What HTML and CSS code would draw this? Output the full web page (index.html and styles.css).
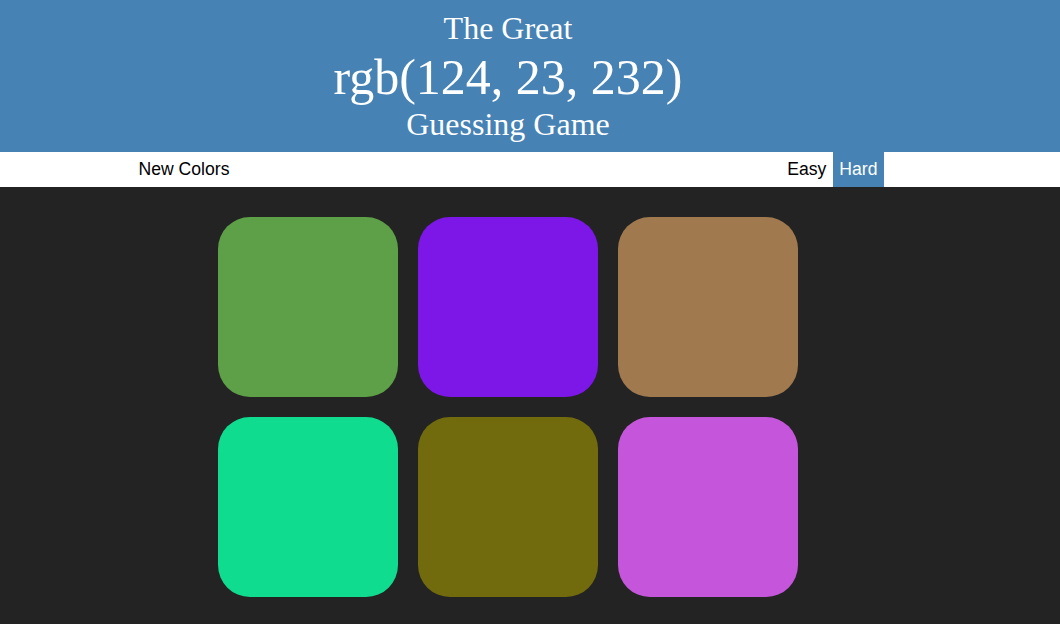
FILE: index.html
```html
<!DOCTYPE html>
<html>
<head>
<meta charset="utf-8">
<title>Color Game</title>
<link rel="stylesheet" href="styles.css">
</head>
<body>
<header class="header">
  <div class="title-small">The Great</div>
  <div class="title-rgb">rgb(124, 23, 232)</div>
  <div class="title-small title-last">Guessing Game</div>
</header>
<nav class="stripe">
  <div class="stripe-inner">
    <button class="btn">New Colors</button>
    <span class="spacer"></span>
    <button class="btn">Easy</button>
    <button class="btn selected">Hard</button>
  </div>
</nav>
<main class="board">
  <div class="grid">
    <div class="square sq-green"></div>
    <div class="square sq-purple"></div>
    <div class="square sq-brown"></div>
    <div class="square sq-teal"></div>
    <div class="square sq-olive"></div>
    <div class="square sq-pink"></div>
  </div>
</main>
</body>
</html>
```

FILE: styles.css
```css
html, body {
  margin: 0;
  padding: 0;
}
body {
  background: #232323;
  height: 624px;
  overflow: hidden;
}
.header {
  background: #4682B4;
  color: #fff;
  font-family: "Liberation Serif", "Times New Roman", serif;
  text-align: center;
  height: 152px;
  box-sizing: border-box;
  padding: 10px 44px 0 0;
}
.title-small {
  font-size: 32px;
  line-height: 36px;
}
.title-rgb {
  font-size: 50px;
  line-height: 55px;
  margin-top: 4px;
}
.title-last {
  margin-top: 1px;
}
.stripe {
  background: #fff;
  height: 35px;
  padding-right: 44px;
}
.stripe-inner {
  width: 752px;
  height: 35px;
  margin: 0 auto;
  display: flex;
  align-items: stretch;
}
.spacer {
  flex: 1;
}
.btn {
  font-family: "Liberation Sans", Arial, sans-serif;
  font-size: 17.6px;
  border: none;
  background: none;
  color: #000;
  padding: 0 6.5px;
  margin: 0;
  height: 35px;
  line-height: 35px;
}
.btn.selected {
  background: #4682B4;
  color: #fff;
}
.board {
  padding: 30px 44px 0 0;
}
.grid {
  width: 580px;
  margin: 0 auto;
  display: grid;
  grid-template-columns: repeat(3, 180px);
  gap: 20px;
}
.square {
  width: 180px;
  height: 180px;
  border-radius: 32px;
}
.sq-green { background: #5DA047; }
.sq-purple { background: #7C17E8; }
.sq-brown { background: #A07A4E; }
.sq-teal { background: #10DC90; }
.sq-olive { background: #716B0E; }
.sq-pink { background: #C556DC; }
```
